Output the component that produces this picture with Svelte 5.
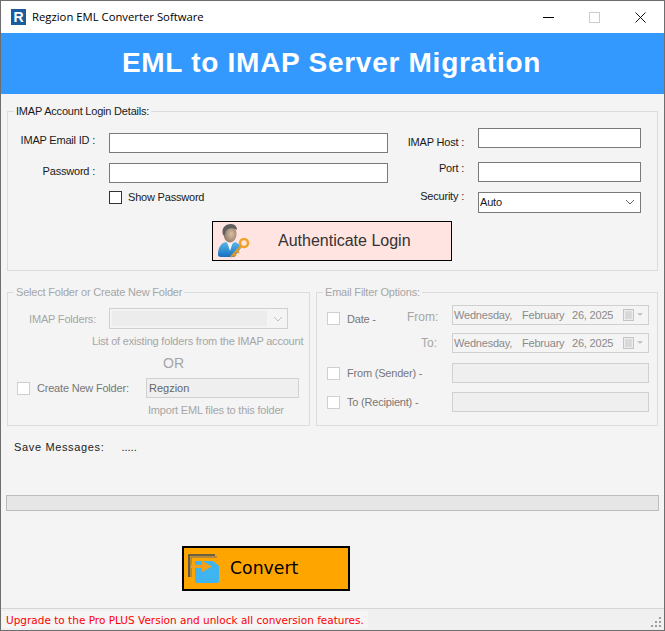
<script lang="ts">
	let email = $state('');
	let password = $state('');
	let host = $state('');
	let port = $state('');
	let showPassword = $state(false);

	const date = ['Wednesday,', 'February', '26, 2025'];
</script>

{#snippet dateField()}
	<div class="date-box">
		<span class="d1">{date[0]}</span>
		<span class="d2">{date[1]}</span>
		<span class="d3">{date[2]}</span>
		<svg class="cal" width="20" height="12" viewBox="0 0 20 12">
			<rect x="0.5" y="0.5" width="10" height="11" fill="#ececec" stroke="#c4c4c4" />
			<path d="M2 3h7M2 5h7M2 7h7M2 9h7M4 3v7M7 3v7" stroke="#cfcfcf" fill="none" />
			<path d="M14 4h6l-3 3z" fill="#c4c4c4" />
		</svg>
	</div>
{/snippet}

<div class="window">
	<div class="titlebar">
		<svg class="logo" width="15" height="16" viewBox="0 0 15 16">
			<rect width="15" height="16" fill="#1a5c9e" />
			<text x="7.5" y="13" text-anchor="middle" class="logo-r">R</text>
		</svg>
		<span class="title">Regzion EML Converter Software</span>
		<div class="controls">
			<svg width="11" height="11" viewBox="0 0 11 11"><path d="M0 5.5h11" stroke="#000" /></svg>
			<svg width="11" height="11" viewBox="0 0 11 11"><rect x="0.5" y="0.5" width="10" height="10" fill="none" stroke="#ccc" /></svg>
			<svg width="11" height="11" viewBox="0 0 11 11"><path d="M0.5 0.5l10 10M10.5 0.5l-10 10" stroke="#111" /></svg>
		</div>
	</div>

	<header class="banner">EML to IMAP Server Migration</header>

	<main class="content">
		<fieldset class="login">
			<legend>IMAP Account Login Details:</legend>
			<div class="login-fields">
				<div class="login-left">
					<div class="row r1">
						<label class="lbl" for="email">IMAP Email ID :</label>
						<input id="email" class="txt wide" bind:value={email} />
					</div>
					<div class="row r2">
						<label class="lbl pw" for="password">Password :</label>
						<input id="password" class="txt wide" type={showPassword ? 'text' : 'password'} bind:value={password} />
					</div>
					<label class="show">
						<input type="checkbox" class="check" bind:checked={showPassword} />
						<span>Show Password</span>
					</label>
				</div>
				<div class="login-right">
					<div class="row">
						<label class="lbl-r host" for="host">IMAP Host :</label>
						<input id="host" class="txt narrow" bind:value={host} />
					</div>
					<div class="row r-port">
						<label class="lbl-r port" for="port">Port :</label>
						<input id="port" class="txt narrow" bind:value={port} />
					</div>
					<div class="row r-sec">
						<span class="lbl-r sec">Security :</span>
						<div class="select">
							<span>Auto</span>
							<svg width="10" height="6" viewBox="0 0 10 6"><path d="M1 1l4 4 4-4" fill="none" stroke="#666" /></svg>
						</div>
					</div>
				</div>
			</div>
			<button class="auth">
				<svg class="auth-icon" width="34" height="36" viewBox="0 0 34 36">
					<defs>
						<linearGradient id="shirt" x1="0" y1="0" x2="0" y2="1">
							<stop offset="0" stop-color="#58b8ea" />
							<stop offset="1" stop-color="#1670c0" />
						</linearGradient>
						<radialGradient id="face" cx="0.6" cy="0.5" r="0.7">
							<stop offset="0" stop-color="#d9c0a4" />
							<stop offset="1" stop-color="#7d6552" />
						</radialGradient>
					</defs>
					<path d="M1 32c0-8 3-12 8-13l4 3 5-3c3 1 5 3 6 6l-7 9H4c-2 0-3-1-3-2z" fill="url(#shirt)" />
					<path d="M10 19l3 9 3-9-3 2z" fill="#f4f4f4" />
					<ellipse cx="13" cy="11" rx="6.5" ry="8.5" fill="url(#face)" />
					<path d="M6 12C4 5 8 1 14 1c4 0 6 3 6 6-3-2-6-2-9-1-2 1-3 3-3 6z" fill="#5f5f5f" />
					<circle cx="27" cy="20" r="4" fill="none" stroke="#eda32c" stroke-width="2.6" />
					<path d="M24 23L14 34M17 31l2 2M20 28l2 2" fill="none" stroke="#e79a22" stroke-width="2" />
				</svg>
				<span>Authenticate Login</span>
			</button>
		</fieldset>

		<div class="panels">
			<fieldset class="folder off">
				<legend>Select Folder or Create New Folder</legend>
				<div class="row folders">
					<span class="f-label">IMAP Folders:</span>
					<div class="combo">
						<span class="combo-fill"></span>
						<svg width="10" height="6" viewBox="0 0 10 6"><path d="M1 1l4 4 4-4" fill="none" stroke="#c0c0c0" /></svg>
					</div>
				</div>
				<p class="hint list">List of existing folders from the IMAP account</p>
				<p class="or">OR</p>
				<div class="row create">
					<span class="check faux"></span>
					<span class="c-label">Create New Folder:</span>
					<input class="txt off-txt" disabled value="Regzion" />
				</div>
				<p class="hint import">Import EML files to this folder</p>
			</fieldset>

			<fieldset class="filter off">
				<legend>Email Filter Options:</legend>
				<div class="date-rows">
					<span class="check faux date-check"></span>
					<span class="date-lbl">Date -</span>
					<div class="date-col">
						<div class="row">
							<span class="from">From:</span>
							{@render dateField()}
						</div>
						<div class="row to-row">
							<span class="from to">To:</span>
							{@render dateField()}
						</div>
					</div>
				</div>
				<div class="row f-row sender">
					<span class="check faux"></span>
					<span class="f-name">From (Sender) -</span>
					<input class="txt off-txt f-input" disabled />
				</div>
				<div class="row f-row recipient">
					<span class="check faux"></span>
					<span class="f-name">To (Recipient) -</span>
					<input class="txt off-txt f-input" disabled />
				</div>
			</fieldset>
		</div>

		<div class="save">
			<span>Save Messages:</span>
			<span class="dots">.....</span>
		</div>

		<div class="progress"></div>

		<button class="convert">
			<svg width="34" height="32" viewBox="0 0 34 32">
				<path d="M1 24V2h26" fill="none" stroke="#3c4a55" stroke-width="1.6" />
				<path d="M3 24V4h26" fill="none" stroke="#6b7277" stroke-width="1" />
				<path d="M7 8h18l6 5v15a2 2 0 0 1-2 2H9a2 2 0 0 1-2-2z" fill="#3eb4f0" />
				<path d="M3 16h11v-5l10 7-10 7v-5H3z" fill="#f2a11c" transform="translate(0 -1) scale(1 .8)" />
			</svg>
			<span>Convert</span>
		</button>
	</main>

	<footer class="status">
		<span>Upgrade to the Pro PLUS Version and unlock all conversion features.</span>
		<svg class="grip" width="10" height="10" viewBox="0 0 10 10">
			<path d="M8 0h2v2H8zM4 4h2v2H4zM8 4h2v2H8zM0 8h2v2H0zM4 8h2v2H4zM8 8h2v2H8z" fill="#a0a0a0" />
		</svg>
	</footer>
</div>

<style>
	:global(body) {
		margin: 0;
		background: #f4f4f4;
	}

	.window {
		width: 665px;
		height: 631px;
		box-sizing: border-box;
		display: flex;
		flex-direction: column;
		border: 1px solid #6e6e6e;
		background: #f4f4f4;
		font-family: 'Liberation Sans', Arial, sans-serif;
		font-size: 11px;
		letter-spacing: -0.2px;
		line-height: 14px;
		color: #1a1a1a;
	}

	.titlebar {
		height: 32px;
		flex: none;
		background: #fff;
		display: flex;
		align-items: center;
		padding-left: 10px;
	}

	.logo-r {
		font-family: 'Liberation Sans', sans-serif;
		font-weight: 700;
		font-size: 14px;
		fill: #fff;
	}

	.title {
		margin-left: 6px;
		font-family: 'Open Sans', sans-serif;
		font-size: 11.3px;
		letter-spacing: 0;
		color: #000;
	}

	.controls {
		margin-left: auto;
		display: flex;
		gap: 35px;
		padding-right: 18px;
	}

	.controls svg {
		display: block;
	}

	.banner {
		height: 61px;
		flex: none;
		padding-right: 2px;
		background: #3399ff;
		color: #fff;
		font-size: 28px;
		font-weight: 700;
		line-height: 60px;
		text-align: center;
		letter-spacing: 0.73px;
	}

	.content {
		flex: 1;
		padding: 10px 6px 0 6px;
	}

	fieldset {
		margin: 0;
		min-width: 0;
		padding: 0;
		border: 1px solid #dcdcdc;
		box-sizing: border-box;
	}

	legend {
		margin-left: 6px;
		padding: 0 2px;
		line-height: 14px;
	}

	.row {
		display: flex;
		align-items: flex-start;
	}

	.txt {
		display: block;
		box-sizing: border-box;
		height: 20px;
		margin: 0;
		padding: 0 2px;
		border: 1px solid #7a7a7a;
		border-radius: 0;
		background: #fff;
		font: inherit;
		outline: none;
	}

	.check {
		appearance: none;
		display: block;
		box-sizing: border-box;
		flex: none;
		width: 13px;
		height: 13px;
		margin: 0;
		border: 1px solid #333;
		background: #fff;
	}

	.check.faux {
		border-color: #cfcfcf;
	}

	/* login panel */
	.login {
		height: 167px;
	}

	.login-fields {
		display: flex;
		justify-content: space-between;
	}

	.login-left {
		padding-top: 15px;
	}

	.lbl {
		width: 87px;
		margin-right: 14px;
		text-align: right;
	}

	.lbl.pw {
		margin-top: 1px;
	}

	.wide {
		width: 279px;
	}

	.r2 {
		margin-top: 10px;
	}

	.show {
		display: flex;
		align-items: center;
		gap: 6px;
		margin: 7px 0 0 101px;
	}

	.login-right {
		padding: 10px 16px 0 0;
	}

	.lbl-r {
		width: 69px;
		margin-right: 14px;
		text-align: right;
	}

	.lbl-r.host {
		margin-top: 7px;
	}

	.lbl-r.port {
		margin-top: -1px;
	}

	.lbl-r.sec {
		margin-top: -3px;
	}

	.narrow {
		width: 163px;
	}

	.r-port {
		margin-top: 13px;
	}

	.r-sec {
		margin-top: 10px;
	}

	.select {
		box-sizing: border-box;
		width: 163px;
		height: 21px;
		display: flex;
		align-items: center;
		justify-content: space-between;
		padding: 0 5px 2px 1px;
		border: 1px solid #7a7a7a;
		background: #fff;
	}

	.auth {
		display: flex;
		align-items: center;
		box-sizing: border-box;
		width: 240px;
		height: 40px;
		margin: 8px 0 0 204px;
		padding: 0 0 0 4px;
		border: 1px solid #000;
		border-radius: 0;
		background: #ffe4e1;
		color: #333;
		font-family: 'Liberation Sans', sans-serif;
		font-size: 16px;
	}

	.auth span {
		margin-left: 27px;
	}

	/* lower panels */
	.panels {
		display: flex;
		gap: 6px;
		margin-top: 14px;
	}

	.off {
		height: 141px;
		color: #a6a6a6;
	}

	.folder {
		width: 303px;
		padding-left: 9px;
	}

	.folder legend {
		margin-left: -3px;
	}

	.filter {
		width: 342px;
		padding-left: 10px;
	}

	.filter legend {
		margin-left: -4px;
	}

	.folders {
		margin-top: 9px;
	}

	.f-label {
		width: 79px;
		margin-top: 4px;
		text-align: right;
	}

	.combo {
		box-sizing: border-box;
		width: 179px;
		height: 21px;
		margin-left: 13px;
		display: flex;
		align-items: center;
		padding: 2px 4px 2px 2px;
		border: 1px solid #d0d0d0;
		background: #f4f4f4;
		gap: 6px;
	}

	.combo-fill {
		flex: 1;
		align-self: stretch;
		background: #ececec;
	}

	.hint {
		margin: 0;
	}

	.list {
		margin: 5px 0 0 75px;
		white-space: nowrap;
	}

	.or {
		margin: 8px 0 0 146px;
		font-size: 14px;
		letter-spacing: 0;
		line-height: 14px;
	}

	.create {
		margin-top: 8px;
		align-items: center;
	}

	.c-label {
		margin-left: 7px;
		width: 109px;
		color: #777;
	}

	.off-txt {
		background: #efefef;
		border: 1px solid #d0d0d0;
		color: #666;
	}

	.create .off-txt {
		width: 153px;
	}

	.import {
		margin: 5px 0 0 131px;
	}

	.date-rows {
		display: flex;
		margin-top: 6px;
	}

	.date-check {
		margin-top: 7px;
	}

	.date-lbl {
		width: 60px;
		margin: 7px 0 0 7px;
		color: #777;
	}

	.from {
		width: 45px;
		margin-top: 5px;
		font-size: 12px;
		letter-spacing: 0;
	}

	.from.to {
		width: 31px;
		margin: 3px 0 0 14px;
	}

	.date-box {
		box-sizing: border-box;
		width: 197px;
		height: 20px;
		display: flex;
		align-items: center;
		padding-left: 1px;
		border: 1px solid #d0d0d0;
		background: #f4f4f4;
		color: #8a8a8a;
	}

	.d1 {
		width: 68px;
	}

	.d2 {
		width: 50px;
	}

	.d3 {
		width: 51px;
	}

	.to-row {
		margin-top: 8px;
	}

	.f-row {
		align-items: center;
	}

	.sender {
		margin-top: 10px;
	}

	.recipient {
		margin-top: 9px;
	}

	.f-name {
		width: 105px;
		margin-left: 7px;
		color: #777;
	}

	.f-input {
		width: 197px;
	}

	.save {
		display: flex;
		margin: 14px 0 0 7px;
		letter-spacing: 0.65px;
		color: #222;
	}

	.dots {
		margin-left: 17px;
		letter-spacing: 0;
	}

	.progress {
		box-sizing: border-box;
		width: 653px;
		height: 16px;
		margin: 41px 0 0 -1px;
		border: 1px solid #bcbcbc;
		background: #e6e6e6;
	}

	.convert {
		box-sizing: border-box;
		display: flex;
		align-items: center;
		width: 168px;
		height: 45px;
		margin: 35px 0 0 175px;
		padding: 0 0 2px 4px;
		border: 2px solid #000;
		border-radius: 0;
		background: #ffa500;
		color: #000;
		font-family: 'DejaVu Sans', sans-serif;
		font-size: 17.3px;
	}

	.convert svg {
		margin-top: 2px;
	}

	.convert span {
		margin-left: 8px;
	}

	.status {
		flex: none;
		height: 22px;
		box-sizing: border-box;
		display: flex;
		align-items: flex-start;
		justify-content: space-between;
		border-top: 1px solid #d6d6d6;
		padding: 2px 3px 0 1px;
		background: #f0f0f0;
		font-family: 'DejaVu Sans', sans-serif;
		font-size: 10.5px;
		letter-spacing: 0;
		color: #f00;
	}

	.status span {
		padding: 0 4px;
		height: 17px;
		line-height: 18px;
		background: #f5f5f5;
		white-space: nowrap;
	}

	.grip {
		margin-top: 6px;
	}
</style>
